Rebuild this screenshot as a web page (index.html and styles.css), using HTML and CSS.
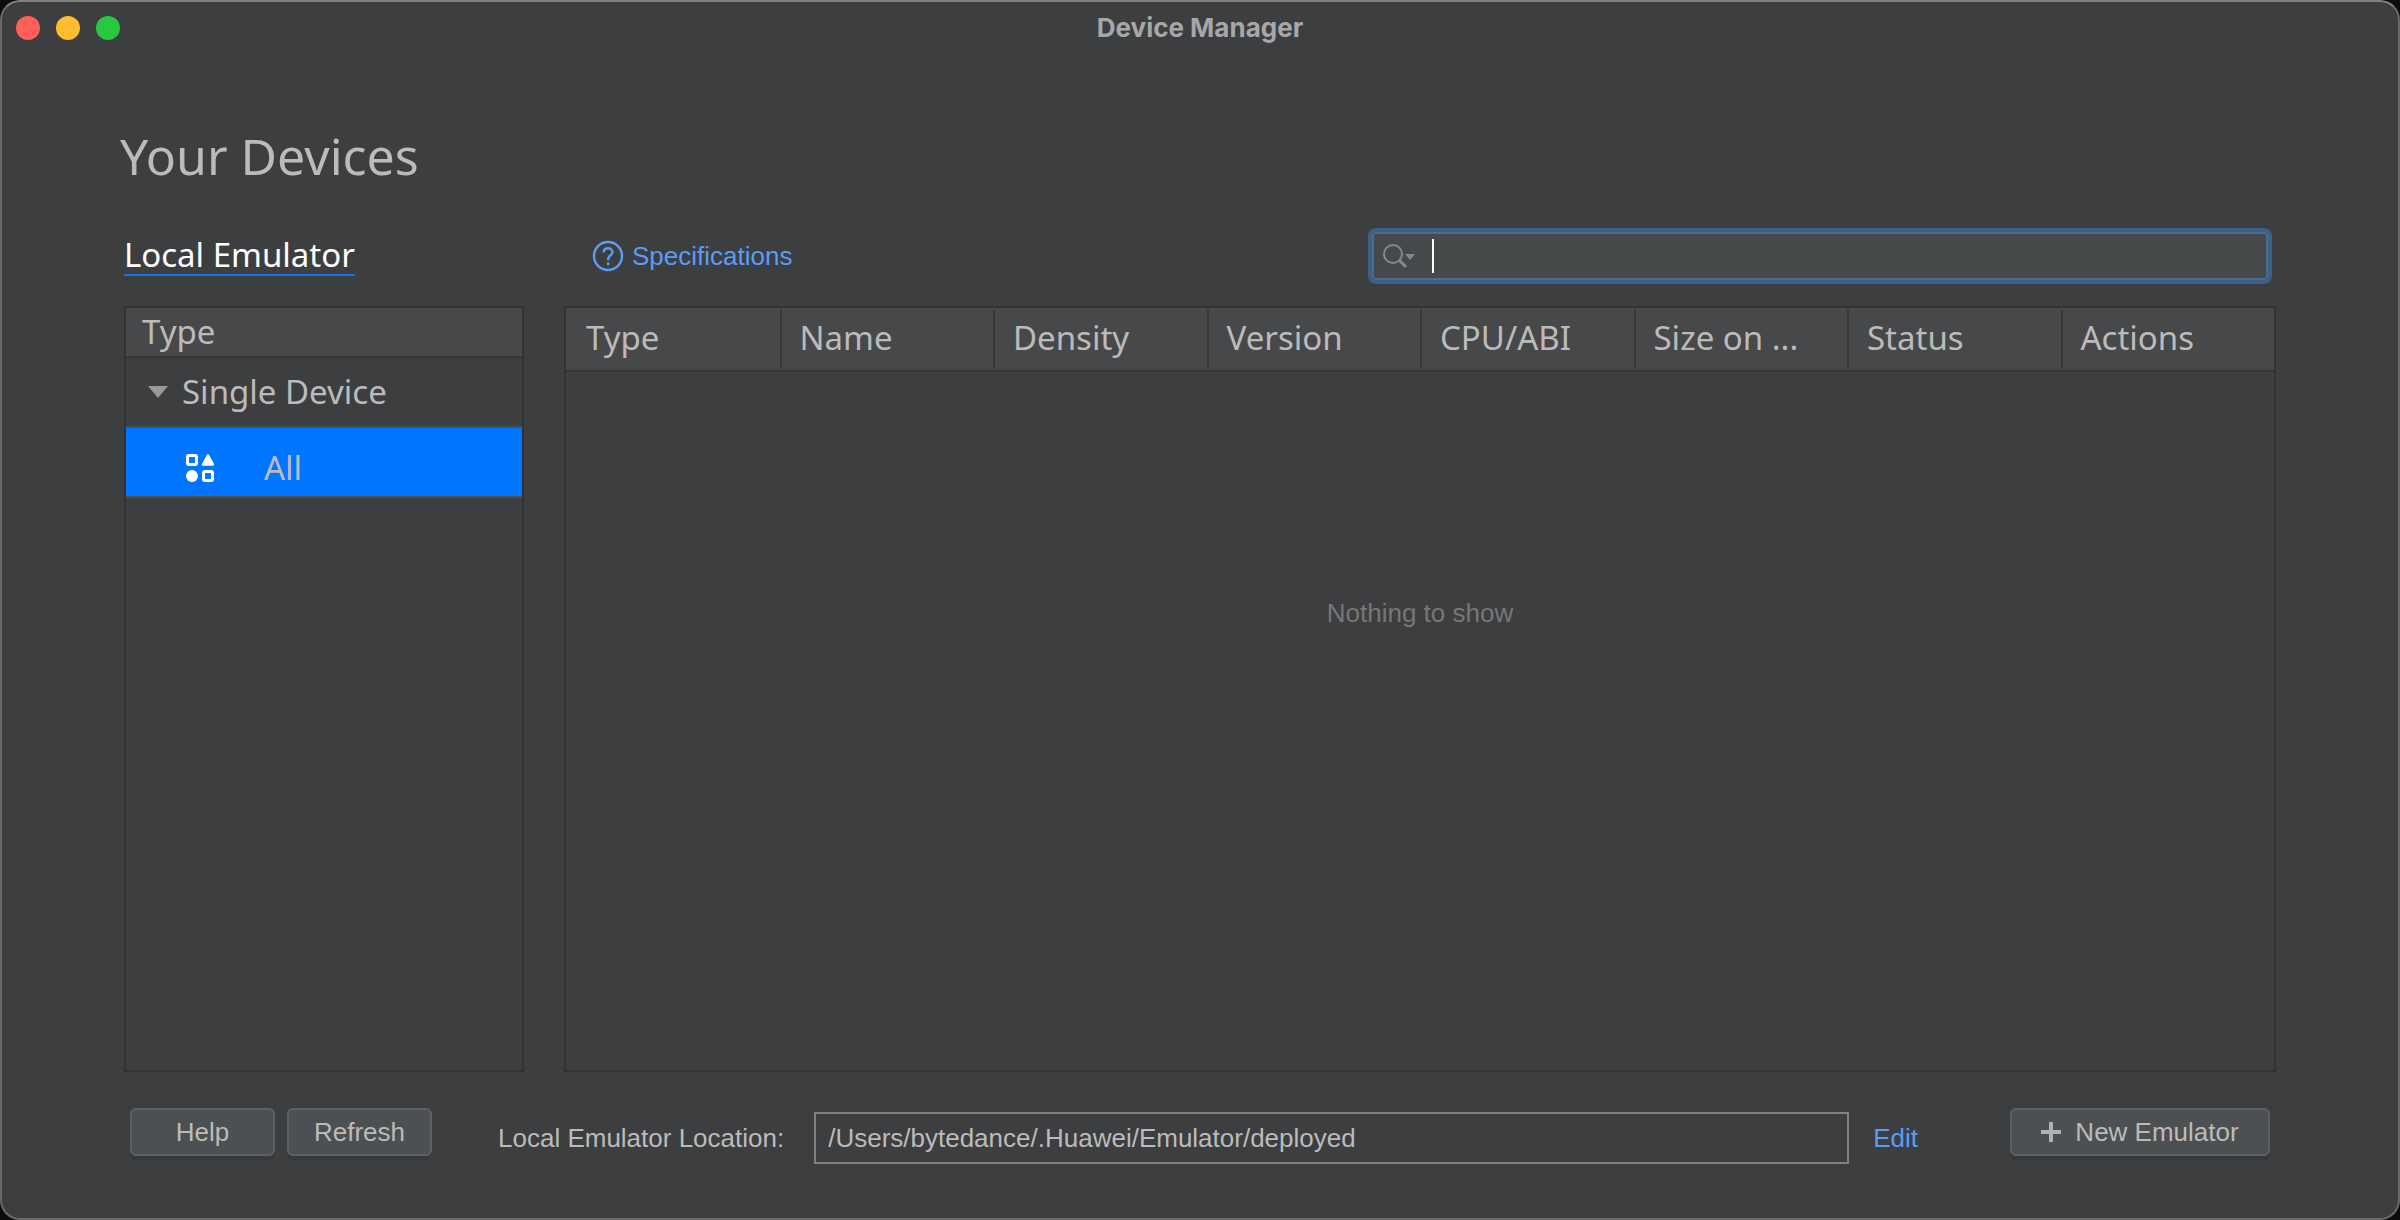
FILE: index.html
```html
<!DOCTYPE html>
<html lang="en">
<head>
    <meta charset="UTF-8">
    <meta name="viewport" content="width=device-width, initial-scale=1.0">
    <title>Device Manager</title>
    <link rel="stylesheet" href="styles.css">
</head>
<body>
    <div class="window">
        <header class="titlebar">
            <div class="window-buttons">
                <button class="dot close" aria-label="Close"></button>
                <button class="dot minimize" aria-label="Minimize"></button>
                <button class="dot maximize" aria-label="Zoom"></button>
            </div>
            <div class="window-title">Device Manager</div>
        </header>

        <main class="content">
            <h1>Your Devices</h1>

            <div class="toolbar">
                <nav class="tabs">
                    <a class="tab" href="#local">Local Emulator</a>
                </nav>
                <div class="tools">
                    <a class="spec-link" href="#specifications">
                        <svg width="32" height="32" viewBox="0 0 32 32" fill="none" stroke="currentColor">
                            <circle cx="16" cy="16" r="14" stroke-width="2.4"/>
                            <path d="M11.6 12.6C11.6 9.8 13.5 8.2 16 8.2s4.5 1.6 4.5 4c0 2.8-4.3 3.4-4.3 6.6v1.4" stroke-width="2.4"/>
                            <circle cx="16.2" cy="23.8" r="1.5" fill="currentColor" stroke="none"/>
                        </svg>
                        <span>Specifications</span>
                    </a>
                    <div class="search">
                        <svg class="search-icon" width="34" height="26" viewBox="0 0 34 26" fill="none" stroke="currentColor">
                            <circle cx="11" cy="11" r="9" stroke-width="2"/>
                            <path d="M17 17l7 7" stroke-width="3"/>
                            <path d="M23 11h10l-5 6z" fill="currentColor" stroke="none"/>
                        </svg>
                        <input type="text" class="search-input" aria-label="Search devices">
                    </div>
                </div>
            </div>

            <div class="panels">
                <aside class="type-panel">
                    <div class="type-header">Type</div>
                    <button class="type-group" aria-expanded="true">
                        <svg width="20" height="12" viewBox="0 0 20 12"><path d="M0 0h20L10 12z" fill="#999"/></svg>
                        <span>Single Device</span>
                    </button>
                    <button class="type-item">
                        <svg width="30" height="28" viewBox="0 0 30 28" fill="none" stroke="#fff" stroke-width="3">
                            <rect x="1.5" y="1.5" width="9" height="9" rx="1.5"/>
                            <path d="M22 1.5l5 9H17z" fill="#fff" stroke-width="2.5" stroke-linejoin="round"/>
                            <circle cx="6" cy="22" r="6" fill="#fff" stroke="none"/>
                            <rect x="17.5" y="17.5" width="9" height="9" rx="1.5"/>
                        </svg>
                        <span>All</span>
                    </button>
                </aside>

                <section class="device-panel">
                    <table class="device-table">
                        <thead>
                            <tr>
                                <th>Type</th>
                                <th>Name</th>
                                <th>Density</th>
                                <th>Version</th>
                                <th>CPU/ABI</th>
                                <th>Size on ...</th>
                                <th>Status</th>
                                <th>Actions</th>
                            </tr>
                        </thead>
                        <tbody>
                            <tr>
                                <td class="empty" colspan="8">Nothing to show</td>
                            </tr>
                        </tbody>
                    </table>
                </section>
            </div>

            <footer class="footer">
                <div class="footer-buttons">
                    <button class="btn btn-small">Help</button>
                    <button class="btn btn-small">Refresh</button>
                </div>
                <div class="location">
                    <label for="location">Local Emulator Location:</label>
                    <input type="text" id="location" class="location-input" value="/Users/bytedance/.Huawei/Emulator/deployed" readonly>
                    <a class="edit-link" href="#edit">Edit</a>
                </div>
                <button class="btn btn-new">
                    <svg width="20" height="20" viewBox="0 0 20 20"><path d="M10 0v20M0 10h20" stroke="#afb1b3" stroke-width="4"/></svg>
                    <span>New Emulator</span>
                </button>
            </footer>
        </main>
    </div>
</body>
</html>
```
FILE: styles.css
```css
* {
    margin: 0;
    padding: 0;
    box-sizing: border-box;
}

body {
    background-color: #0c0c0d;
    color: #bbb;
    font-family: "Liberation Sans", Arial, sans-serif;
    font-size: 26px;
    line-height: 32px;
}

button,
input {
    font: inherit;
    color: inherit;
    border: none;
    outline: none;
}

a {
    color: #589df6;
    text-decoration: none;
}

svg {
    flex-shrink: 0;
}

.window {
    min-height: 100vh;
    display: flex;
    flex-direction: column;
    background-color: #3d3e40;
    border: 2px solid #69696b;
    border-top-color: #7f8082;
    border-radius: 20px;
}

/* title bar */
.titlebar {
    display: grid;
    grid-template-columns: 1fr auto 1fr;
    align-items: center;
    height: 52px;
    padding: 0 14px;
}

.window-buttons {
    display: flex;
    gap: 16px;
}

.dot {
    width: 24px;
    height: 24px;
    border-radius: 50%;
}

.close {
    background-color: #ff5f57;
}

.minimize {
    background-color: #febc2e;
}

.maximize {
    background-color: #28c840;
}

.window-title {
    font-family: Inter, sans-serif;
    font-size: 26px;
    font-weight: 700;
    color: #a6a7a9;
}

/* content */
.content {
    flex: 1;
    display: flex;
    flex-direction: column;
    padding: 70px 118px 54px;
}

h1 {
    font-family: "Noto Sans", sans-serif;
    font-size: 50px;
    font-weight: 400;
    line-height: 64px;
    margin-bottom: 40px;
}

.toolbar,
.panels {
    display: grid;
    grid-template-columns: 400px 1fr;
    gap: 40px;
    margin: 0 4px;
}

.toolbar {
    align-items: center;
    margin-bottom: 22px;
}

.tab {
    display: inline-block;
    font-family: "Noto Sans", sans-serif;
    font-size: 33px;
    line-height: 38px;
    color: #fff;
    border-bottom: 2px solid #1a73e0;
}

.tools {
    display: flex;
    align-items: center;
    justify-content: space-between;
    padding: 0 4px 0 28px;
}

.spec-link {
    display: flex;
    align-items: center;
    gap: 8px;
}

.search {
    display: flex;
    align-items: center;
    width: 904px;
    max-width: 54%;
    height: 56px;
    padding-left: 10px;
    background-color: #45494a;
    border: 4px solid #3d6185;
    border-radius: 8px;
    box-shadow: inset 0 0 0 2px #466d94;
    color: #7f8b91;
}

.search-input {
    flex: 1;
    height: 34px;
    margin: 0 8px 0 16px;
    background: linear-gradient(#fff, #fff) no-repeat left / 2px 100%;
    color: #bbb;
    caret-color: transparent;
}

/* panels */
.panels {
    flex: 1;
    font-family: "Noto Sans", sans-serif;
    font-size: 33px;
    line-height: 48px;
}

.type-panel,
.device-panel {
    border: 2px solid #323334;
}

.type-header {
    padding-left: 16px;
    background-color: #47484a;
    border-bottom: 2px solid #353637;
}

.type-group,
.type-item {
    display: flex;
    align-items: center;
    width: 100%;
    height: 70px;
    background-color: transparent;
    border-bottom: 2px solid #4b5052;
}

.type-group {
    gap: 14px;
    padding-left: 22px;
}

.type-item {
    gap: 48px;
    padding: 12px 0 0 60px;
    background-color: #0075ff;
}

.device-table {
    width: 100%;
    table-layout: fixed;
    border-collapse: separate;
    border-spacing: 0;
}

.device-table th {
    height: 64px;
    padding: 0 0 2px 20px;
    font-weight: 400;
    text-align: left;
    white-space: nowrap;
    background-color: #47484a;
    border-bottom: 2px solid #353637;
}

.device-table th + th {
    background-image: linear-gradient(#353637, #353637);
    background-repeat: no-repeat;
    background-position: left center;
    background-size: 2px calc(100% - 4px);
}

.device-table .empty {
    padding-top: 225px;
    font-family: "Liberation Sans", Arial, sans-serif;
    font-size: 26px;
    line-height: 32px;
    text-align: center;
    color: #777;
}

/* footer */
.footer {
    display: flex;
    align-items: flex-start;
    gap: 66px;
    padding: 36px 10px 0;
}

.footer-buttons {
    display: flex;
    gap: 12px;
}

.btn {
    height: 48px;
    background-color: #4c5052;
    border: 2px solid #5e6162;
    border-radius: 6px;
    box-shadow: 0 4px 0 #38393b;
}

.btn-small {
    width: 145px;
}

.location {
    flex: 1;
    display: flex;
    align-items: center;
    padding-top: 4px;
}

.location-input {
    flex: 1;
    height: 52px;
    margin: 0 24px 0 30px;
    padding: 0 12px;
    background-color: transparent;
    border: 2px solid #808182;
}

.btn-new {
    display: flex;
    align-items: center;
    justify-content: center;
    gap: 14px;
    width: 260px;
    margin-left: 26px;
}
```
